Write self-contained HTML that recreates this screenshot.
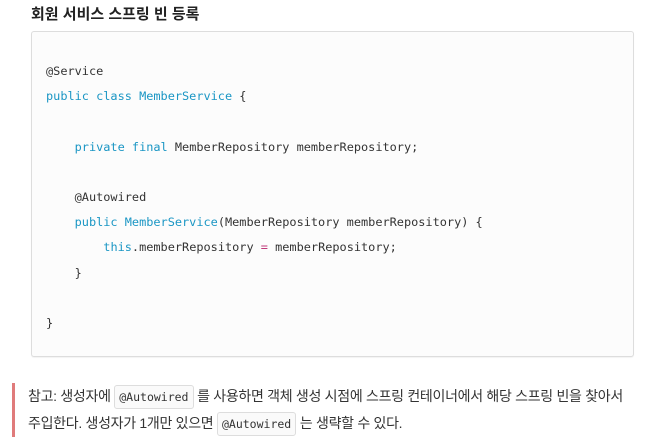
<!DOCTYPE html>
<html><head><meta charset="utf-8"><style>
body{margin:0;background:#fff;width:648px;height:439px;overflow:hidden;font-family:"Liberation Sans","Noto Sans CJK KR",sans-serif;color:#222}
h4{position:absolute;left:31px;top:5px;margin:0;font-size:15px;font-weight:bold;line-height:20px;color:#222}
pre{position:absolute;left:31px;top:31px;width:603px;height:326px;margin:0;box-sizing:border-box;border:1px solid #ddd;border-radius:3px;background:#fcfcfc;padding:27px 14px;font-family:"DejaVu Sans Mono",monospace;font-size:11.9px;line-height:25.2px;color:#333;box-shadow:0 1px 1px rgba(0,0,0,.05)}
.k{color:#1a96c4}.o{color:#c0397a}
.q{position:absolute;left:12px;top:383px;border-left:3px solid #e07b7b;padding-left:13px;font-size:14px;line-height:26px;color:#333;width:620px;letter-spacing:-0.3px}
code{font-family:"DejaVu Sans Mono",monospace;font-size:11.5px;border:1px solid #ddd;border-radius:3px;background:#fafafa;padding:4px 4px;letter-spacing:0}
</style></head><body>
<h4>회원 서비스 스프링 빈 등록</h4>
<pre>@Service
<span class="k">public class MemberService</span> {

    <span class="k">private final</span> MemberRepository memberRepository;

    @Autowired
    <span class="k">public MemberService</span>(MemberRepository memberRepository) {
        <span class="k">this</span>.memberRepository <span class="o">=</span> memberRepository;
    }

}</pre>
<div class="q">참고: 생성자에 <code>@Autowired</code> 를 사용하면 객체 생성 시점에 스프링 컨테이너에서 해당 스프링 빈을 찾아서<br>주입한다. 생성자가 1개만 있으면 <code>@Autowired</code> 는 생략할 수 있다.</div>
</body></html>
